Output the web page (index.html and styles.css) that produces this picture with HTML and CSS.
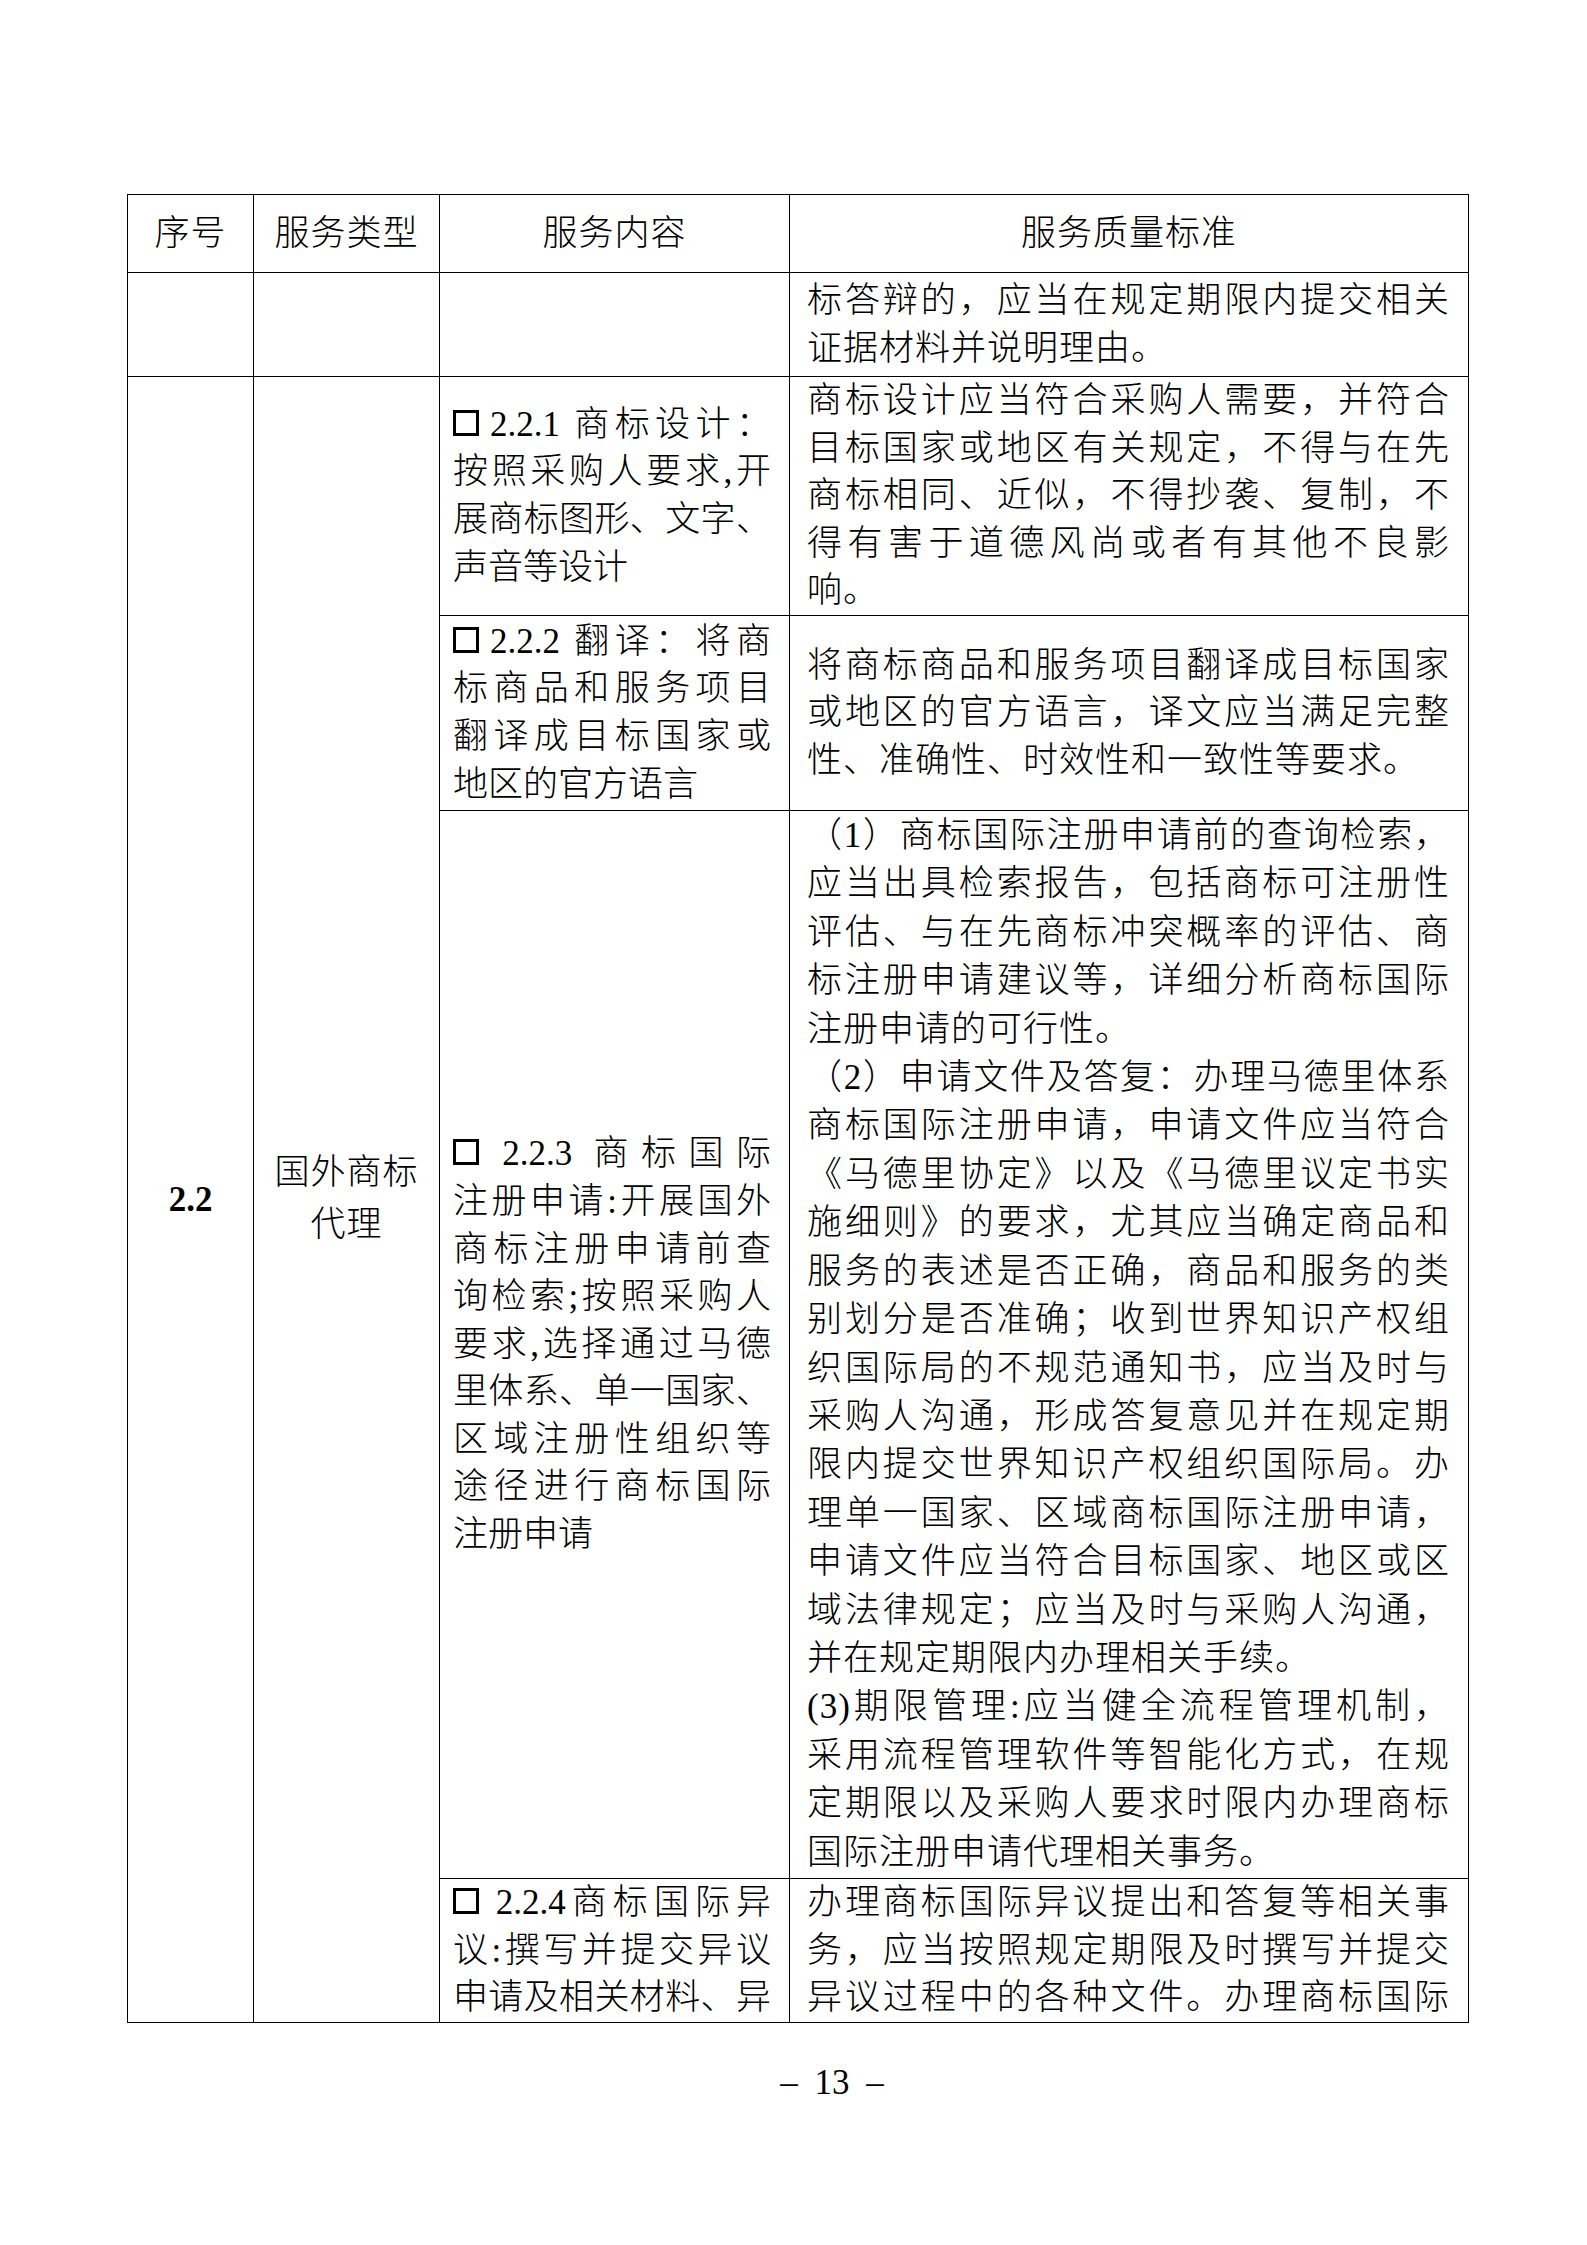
FILE: index.html
```html
<!DOCTYPE html>
<html lang="zh-CN">
<head>
<meta charset="utf-8">
<title>服务质量标准</title>
<link rel="stylesheet" href="styles.css">
</head>
<body>
<div class="page">
  <table class="grid">
    <colgroup>
      <col class="c1"><col class="c2"><col class="c3"><col class="c4">
    </colgroup>
    <tr class="head">
      <th>序号</th>
      <th>服务类型</th>
      <th>服务内容</th>
      <th>服务质量标准</th>
    </tr>
    <tr class="r0">
      <td></td>
      <td></td>
      <td></td>
      <td class="std">
        <span class="l j">标答辩的，应当在规定期限内提交相关</span>
        <span class="l">证据材料并说明理由。</span>
      </td>
    </tr>
    <tr class="r1">
      <td class="num" rowspan="4">2.2</td>
      <td class="type" rowspan="4"><span class="l">国外商标</span><span class="l">代理</span></td>
      <td class="svc">
        <span class="l j"><span class="box gap"></span>2.2.1 商标设计：</span>
        <span class="l j">按照采购人要求,开</span>
        <span class="l j">展商标图形、文字、</span>
        <span class="l">声音等设计</span>
      </td>
      <td class="std">
        <span class="l j">商标设计应当符合采购人需要，并符合</span>
        <span class="l j">目标国家或地区有关规定，不得与在先</span>
        <span class="l j">商标相同、近似，不得抄袭、复制，不</span>
        <span class="l j">得有害于道德风尚或者有其他不良影</span>
        <span class="l">响。</span>
      </td>
    </tr>
    <tr class="r2">
      <td class="svc">
        <span class="l j"><span class="box gap"></span>2.2.2 翻译：将商</span>
        <span class="l j">标商品和服务项目</span>
        <span class="l j">翻译成目标国家或</span>
        <span class="l">地区的官方语言</span>
      </td>
      <td class="std">
        <span class="l j">将商标商品和服务项目翻译成目标国家</span>
        <span class="l j">或地区的官方语言，译文应当满足完整</span>
        <span class="l">性、准确性、时效性和一致性等要求。</span>
      </td>
    </tr>
    <tr class="r3">
      <td class="svc">
        <span class="l j"><span class="box"></span> 2.2.3 商标国际</span>
        <span class="l j">注册申请:开展国外</span>
        <span class="l j">商标注册申请前查</span>
        <span class="l j">询检索;按照采购人</span>
        <span class="l j">要求,选择通过马德</span>
        <span class="l j">里体系、单一国家、</span>
        <span class="l j">区域注册性组织等</span>
        <span class="l j">途径进行商标国际</span>
        <span class="l">注册申请</span>
      </td>
      <td class="std">
        <span class="l j">（1）商标国际注册申请前的查询检索，</span>
        <span class="l j">应当出具检索报告，包括商标可注册性</span>
        <span class="l j">评估、与在先商标冲突概率的评估、商</span>
        <span class="l j">标注册申请建议等，详细分析商标国际</span>
        <span class="l">注册申请的可行性。</span>
        <span class="l j">（2）申请文件及答复：办理马德里体系</span>
        <span class="l j">商标国际注册申请，申请文件应当符合</span>
        <span class="l j">《马德里协定》以及《马德里议定书实</span>
        <span class="l j">施细则》的要求，尤其应当确定商品和</span>
        <span class="l j">服务的表述是否正确，商品和服务的类</span>
        <span class="l j">别划分是否准确；收到世界知识产权组</span>
        <span class="l j">织国际局的不规范通知书，应当及时与</span>
        <span class="l j">采购人沟通，形成答复意见并在规定期</span>
        <span class="l j">限内提交世界知识产权组织国际局。办</span>
        <span class="l j">理单一国家、区域商标国际注册申请，</span>
        <span class="l j">申请文件应当符合目标国家、地区或区</span>
        <span class="l j">域法律规定；应当及时与采购人沟通，</span>
        <span class="l">并在规定期限内办理相关手续。</span>
        <span class="l j">(3)期限管理:应当健全流程管理机制，</span>
        <span class="l j">采用流程管理软件等智能化方式，在规</span>
        <span class="l j">定期限以及采购人要求时限内办理商标</span>
        <span class="l">国际注册申请代理相关事务。</span>
      </td>
    </tr>
    <tr class="r4">
      <td class="svc">
        <span class="l j"><span class="box"></span> 2.2.4商标国际异</span>
        <span class="l j">议:撰写并提交异议</span>
        <span class="l j">申请及相关材料、异</span>
      </td>
      <td class="std">
        <span class="l j">办理商标国际异议提出和答复等相关事</span>
        <span class="l j">务，应当按照规定期限及时撰写并提交</span>
        <span class="l j">异议过程中的各种文件。办理商标国际</span>
      </td>
    </tr>
  </table>
  <div class="folio">– 13 –</div>
</div>
</body>
</html>
```

FILE: styles.css
```css
html, body {
  margin: 0;
  padding: 0;
  background: #fff;
}

.page {
  width: 1587px;
  height: 2245px;
  padding-top: 194px;
  box-sizing: border-box;
  font-family: "Liberation Serif", "Noto Sans CJK SC", serif;
  color: #000;
}

.grid {
  margin-left: 127px;
  width: 1341px;
  border-collapse: collapse;
  table-layout: fixed;
  font-size: 35px;
  font-weight: 300;
}

.c1 { width: 126px; }
.c2 { width: 186px; }
.c3 { width: 350px; }
.c4 { width: 679px; }

.grid th,
.grid td {
  border: 1.5px solid #000;
  vertical-align: middle;
  line-height: 47.6px;
  padding: 0;
}

.grid th {
  font-weight: 300;
  text-align: center;
  height: 77px;
  letter-spacing: 1px;
}

.r0 { height: 104px; }
.r1 { height: 239px; }
.r2 { height: 195px; }
.r3 { height: 1068px; }
.r4 { height: 143px; }

.r3 .std {
  line-height: 48.4px;
}

.l {
  display: block;
  white-space: nowrap;
}

.j {
  text-align: justify;
  text-align-last: justify;
}

.std {
  padding: 0 18px 0 17px !important;
  letter-spacing: 1px;
}

.svc {
  padding: 0 18px 0 13px !important;
}

.num {
  text-align: center;
  font-weight: 700;
  font-size: 35px;
}

.type {
  text-align: center;
  letter-spacing: 1px;
}

.type .l {
  line-height: 52px;
}

.box {
  display: inline-block;
  width: 26px;
  height: 26px;
  border: 3.5px solid #000;
  box-sizing: border-box;
  vertical-align: baseline;
  margin-right: 2px;
}

.box.gap {
  margin-right: 11px;
}

.folio {
  margin-top: 40px;
  padding-left: 77px;
  text-align: center;
  font-family: "Liberation Serif", serif;
  font-size: 35px;
  line-height: 40px;
  word-spacing: 8px;
}
```
